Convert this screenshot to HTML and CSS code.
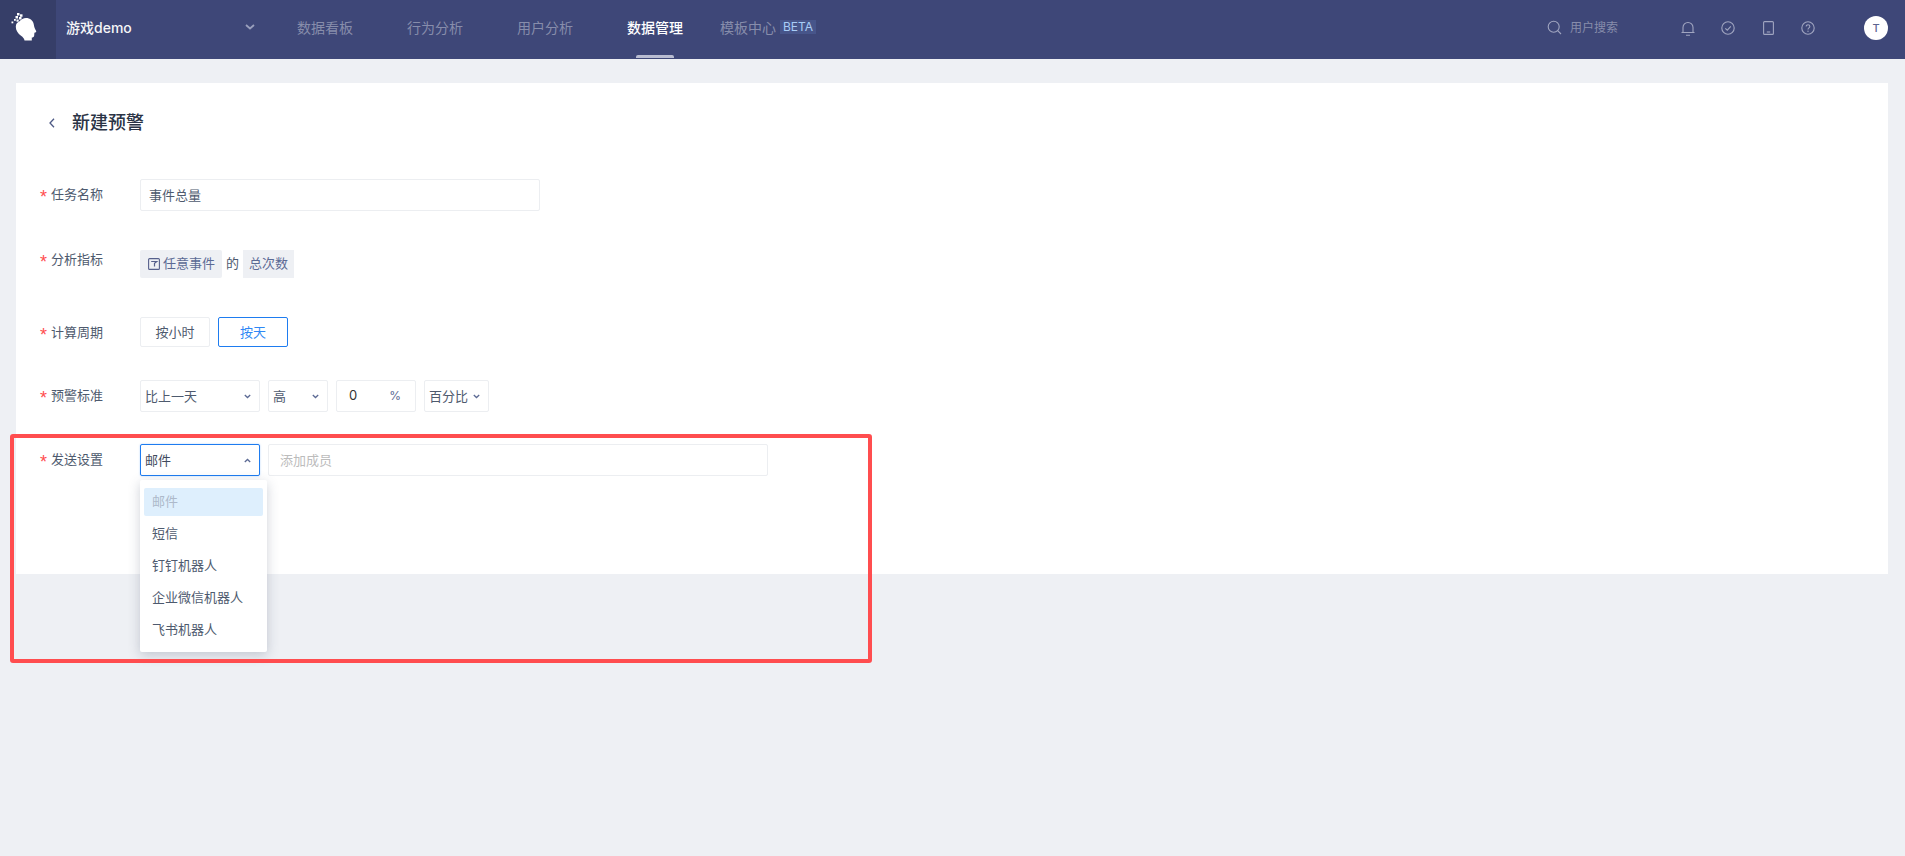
FILE: index.html
```html
<!DOCTYPE html>
<html lang="zh-CN">
<head>
<meta charset="utf-8">
<title>新建预警</title>
<link rel="stylesheet" href="styles.css">
</head>
<body>
<header class="topbar">
  <div class="logo">
    <svg width="56" height="59" viewBox="0 0 56 59">
      <path fill="#fff" d="M24.500 40.500C24.200 38.500 23 37.200 21 35.800 18 33.700 15.800 30.500 15.800 26.800 15.800 24 17.300 22.300 19.500 21.300 21 19.300 23.500 18 26 18 30 18 33.200 20.500 33.800 24.500 34.100 27 35 29 36.200 31 36.500 32 35.500 32.500 34.400 32.800L34.200 35.500C34.100 36.900 33 37.600 31.800 37.600L31.800 40.500Z"/>
      <g fill="#fff">
        <rect x="17" y="13" width="2.500" height="2.500"/><rect x="20" y="14.300" width="2.500" height="2.500"/>
        <rect x="15.500" y="16" width="2.500" height="2.500"/><rect x="19" y="17" width="2.500" height="2.500"/>
        <rect x="16.500" y="19.500" width="2.200" height="2.200"/><rect x="14" y="19" width="1.800" height="1.800"/>
        <rect x="11.500" y="21.500" width="1.800" height="1.800"/>
      </g>
    </svg>
  </div>
  <div class="project">
    <span class="project-name">游戏demo</span>
    <svg class="project-chevron" width="10" height="6" viewBox="0 0 10 6"><path d="M1 1l4 3.500L9 1" fill="none" stroke="#9aa0bd" stroke-width="1.800"/></svg>
  </div>
  <nav class="nav">
    <a class="nav-item">数据看板</a>
    <a class="nav-item">行为分析</a>
    <a class="nav-item">用户分析</a>
    <a class="nav-item nav-active">数据管理</a>
    <a class="nav-item nav-beta">模板中心<span class="beta">BETA</span></a>
  </nav>
  <div class="tools">
    <div class="search">
      <svg width="15" height="15" viewBox="0 0 15 15"><circle cx="6.700" cy="6.700" r="5.500" fill="none" stroke="#a0a5c0" stroke-width="1.100"/><path d="M10.700 10.700l3.300 3.300" stroke="#a0a5c0" stroke-width="1.100"/></svg>
      <span>用户搜索</span>
    </div>
    <div class="icons">
      <svg width="14" height="15" viewBox="0 0 14 15"><path d="M.5 11.500h13M2 11.500V6.500a5 5 0 0 1 10 0v5M5 14.300h4" fill="none" stroke="#a0a5c0" stroke-width="1.100"/></svg>
      <svg width="14" height="14" viewBox="0 0 14 14"><circle cx="7" cy="7" r="6.200" fill="none" stroke="#a0a5c0" stroke-width="1.100"/><path d="M4.300 7.300l2 1.900 3.500-3.900" fill="none" stroke="#a0a5c0" stroke-width="1.100"/></svg>
      <svg width="11" height="14" viewBox="0 0 11 14"><rect x=".6" y=".6" width="9.800" height="12.800" rx="1" fill="none" stroke="#a0a5c0" stroke-width="1.100"/><path d="M3.800 11h3.400" stroke="#a0a5c0" stroke-width="1.100"/></svg>
      <svg width="14" height="14" viewBox="0 0 14 14"><circle cx="7" cy="7" r="6.200" fill="none" stroke="#a0a5c0" stroke-width="1.100"/><path d="M5.200 5.500c0-1 .8-1.700 1.800-1.700s1.800 .7 1.800 1.600c0 1.500-1.800 1.400-1.800 3" fill="none" stroke="#a0a5c0" stroke-width="1.100"/><circle cx="7" cy="10.200" r=".7" fill="#a0a5c0"/></svg>
    </div>
    <div class="avatar">T</div>
  </div>
</header>

<main class="page">
  <section class="card">
    <div class="title-row">
      <svg class="back" width="6" height="10" viewBox="0 0 6 10"><path d="M5 .8L1 5l4 4.200" fill="none" stroke="#4e5a85" stroke-width="1.300"/></svg>
      <h1 class="title">新建预警</h1>
    </div>
    <div class="form">
      <div class="row row-name">
        <label class="label"><i class="star">*</i>任务名称</label>
        <div class="box box-name">事件总量</div>
      </div>
      <div class="row row-metric">
        <label class="label label-top"><i class="star">*</i>分析指标</label>
        <div class="chips">
          <span class="chip chip-event">
            <svg width="12" height="12" viewBox="0 0 12 12"><rect x=".6" y=".6" width="10.800" height="10.800" rx="1" fill="none" stroke="#56608c" stroke-width="1.100"/><path d="M3.200 3.500h5.600L6.500 5.400v3.200" fill="none" stroke="#56608c" stroke-width="1.200"/></svg>
            任意事件
          </span>
          <span class="of">的</span>
          <span class="chip chip-total">总次数</span>
        </div>
      </div>
      <div class="row row-period">
        <label class="label label-btn"><i class="star">*</i>计算周期</label>
        <div class="buttons">
          <button class="btn">按小时</button>
          <button class="btn btn-on">按天</button>
        </div>
      </div>
      <div class="row row-rule">
        <label class="label"><i class="star">*</i>预警标准</label>
        <div class="controls">
          <div class="box select sel-compare">比上一天<svg class="chev" width="7" height="5" viewBox="0 0 7 5"><path d="M.8 1l2.700 2.500L6.200 1" fill="none" stroke="#5c6a94" stroke-width="1.300"/></svg></div>
          <div class="box select sel-high">高<svg class="chev" width="7" height="5" viewBox="0 0 7 5"><path d="M.8 1l2.700 2.500L6.200 1" fill="none" stroke="#5c6a94" stroke-width="1.300"/></svg></div>
          <div class="box box-num"><span class="num">0</span><span class="pct">%</span></div>
          <div class="box select sel-unit">百分比<svg class="chev" width="7" height="5" viewBox="0 0 7 5"><path d="M.8 1l2.700 2.500L6.200 1" fill="none" stroke="#5c6a94" stroke-width="1.300"/></svg></div>
        </div>
      </div>
      <div class="row row-send">
        <label class="label"><i class="star">*</i>发送设置</label>
        <div class="controls">
          <div class="select-wrap">
            <div class="box select sel-compare sel-open">邮件<svg class="chev" width="7" height="5" viewBox="0 0 7 5"><path d="M.8 4l2.700-2.500L6.200 4" fill="none" stroke="#5c6a94" stroke-width="1.300"/></svg></div>
            <ul class="menu">
              <li class="menu-item menu-on">邮件</li>
              <li class="menu-item">短信</li>
              <li class="menu-item">钉钉机器人</li>
              <li class="menu-item">企业微信机器人</li>
              <li class="menu-item">飞书机器人</li>
            </ul>
          </div>
          <div class="box box-member">添加成员</div>
        </div>
      </div>
    </div>
  </section>
  <div class="annotation"></div>
</main>
</body>
</html>
```

FILE: styles.css
```css
* { box-sizing: border-box; }
html, body { margin: 0; height: 100%; }
body {
  background: #eef0f4;
  font-family: Inter, "Noto Sans CJK SC", sans-serif;
  font-size: 13px;
  color: #4e5a6e;
  overflow: hidden;
}

/* top bar */
.topbar {
  display: flex;
  align-items: center;
  height: 59px;
  background: #3e4778;
  position: relative;
}
.logo {
  width: 56px;
  height: 59px;
  background: #363e68;
}
.logo svg { display: block; }
.project {
  width: 241px;
  height: 59px;
  padding: 0 42px 5px 10px;
  display: flex;
  align-items: center;
  justify-content: space-between;
}
.project-name { color: #fff; font-size: 14px; font-weight: 500; opacity: .95; }
.nav { display: flex; align-items: center; height: 59px; }
.nav-item {
  position: relative;
  display: flex;
  align-items: center;
  height: 59px;
  padding-bottom: 5px;
  margin-right: 54px;
  font-size: 14px;
  color: #878dab;
  white-space: nowrap;
}
.nav-active { color: #fff; font-weight: 500; margin-right: 37px; }
.nav-active::after {
  content: "";
  position: absolute;
  left: 9px;
  right: 9px;
  bottom: 1px;
  height: 3px;
  border-radius: 2px 2px 0 0;
  background: #b9bdd2;
}
.nav-beta { margin-right: 0; }
.beta {
  margin-left: 4px;
  width: 36px;
  height: 14px;
  line-height: 14px;
  text-align: center;
  background: #47558a;
  color: #a9cdf7;
  font-size: 12px;
}
.tools { margin-left: auto; display: flex; align-items: center; padding-right: 17px; height: 59px; }
.search { display: flex; align-items: center; gap: 8px; color: #878dab; font-size: 12px; padding-bottom: 6px; }
.search svg { margin-top: 2px; }
.icons {
  display: grid;
  grid-template-columns: repeat(4, 40px);
  justify-items: center;
  align-items: center;
  margin-left: 50px;
  margin-right: 36px;
  padding-bottom: 3px;
}
.avatar {
  width: 24px;
  height: 24px;
  border-radius: 50%;
  background: #fff;
  color: #5c6590;
  font-size: 11px;
  font-weight: 500;
  text-align: center;
  line-height: 24px;
  margin-top: -3px;
}

/* page */
.page { position: relative; padding: 24px 17px 0 16px; }
.card { background: #fff; height: 491px; padding: 26px 24px 0; }
.title-row { display: flex; align-items: center; height: 28px; padding-left: 9px; }
.back { margin-right: 17px; }
.title { margin: 0; font-size: 18px; font-weight: 500; color: #2a3345; line-height: 28px; }

.form { margin-top: 42px; display: flex; flex-direction: column; }
.row { display: flex; align-items: flex-start; }
.row-name { margin-bottom: 39px; }
.row-metric { margin-bottom: 39px; }
.row-period { margin-bottom: 33px; }
.row-rule { margin-bottom: 32px; }
.label {
  width: 100px;
  flex: none;
  display: block;
  height: 20px;
  line-height: 20px;
  margin-top: 5px;
  color: #4e5a6e;
}
.label-top { margin-top: -1px; }
.star {
  display: inline-block;
  width: 11px;
  height: 20px;
  padding-top: 3px;
  font-family: "Liberation Sans", sans-serif;
  font-style: normal;
  color: #ff4d4f;
  font-size: 18px;
  line-height: 20px;
  vertical-align: top;
}

.box {
  height: 32px;
  border: 1px solid #eceef1;
  border-radius: 2px;
  background: #fff;
  display: flex;
  align-items: center;
  padding-bottom: 2px;
}
.box-name { width: 400px; padding-left: 8px; }

.chips { display: flex; align-items: center; height: 28px; }
.chip {
  display: flex;
  align-items: center;
  height: 28px;
  padding-bottom: 3px;
  background: #eef0f4;
  color: #5c6a94;
}
.chip svg { margin-top: 3px; }
.chip-event { width: 82px; padding-left: 8px; gap: 3px; border-radius: 2px; }
.chip-total { width: 51px; justify-content: center; }
.of { width: 21px; text-align: center; line-height: 26px; height: 28px; }

.buttons { display: flex; gap: 8px; }
.btn {
  width: 70px;
  height: 30px;
  padding: 0 0 2px;
  border: 1px solid #eceef1;
  border-radius: 2px;
  background: #fff;
  color: #4e5a6e;
  font: inherit;
}
.btn-on { border-color: #1e7cf0; color: #2f88f5; }

.controls { display: flex; gap: 8px; align-items: flex-start; }
.select { justify-content: space-between; padding: 0 8px 2px 4px; }
.chev { margin-top: 2px; }
.sel-compare { width: 120px; }
.sel-high { width: 60px; }
.sel-unit { width: 65px; padding-right: 8px; }
.box-num { width: 80px; padding: 0 14px 2px 12px; justify-content: space-between; }
.num { color: #333; }
.pct { color: #5c6a94; font-size: 12px; }

.select-wrap { position: relative; }
.sel-open { border-color: #1e7cf0; box-shadow: 0 0 2px rgba(30, 124, 240, .35); color: #3f4a5e; }
.box-member { width: 500px; padding-left: 11px; color: #bcbcbc; }
.menu {
  position: absolute;
  z-index: 3;
  top: 36px;
  left: 0;
  width: 127px;
  margin: 0;
  padding: 8px 4px;
  list-style: none;
  background: #fff;
  border-radius: 2px;
  box-shadow: 0 3px 12px rgba(60, 70, 100, .25);
  display: flex;
  flex-direction: column;
  gap: 4px;
}
.menu-item { height: 28px; line-height: 26px; padding-left: 8px; border-radius: 2px; white-space: nowrap; }
.menu-on { background: #deeffd; color: #adb9ca; }

/* annotation box drawn over the screenshot */
.annotation {
  position: absolute;
  z-index: 4;
  left: 10px;
  top: 375px;
  width: 862px;
  height: 229px;
  border: 4px solid #ff4d4f;
  border-radius: 3px;
  pointer-events: none;
}
```
